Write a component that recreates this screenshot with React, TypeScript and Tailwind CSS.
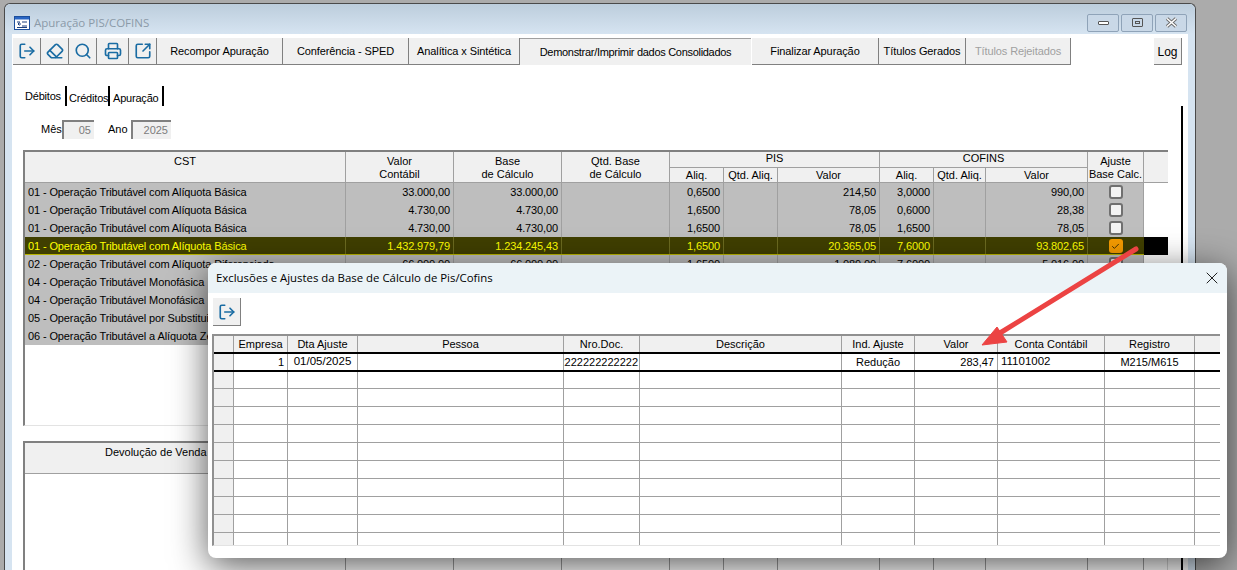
import React from 'react';
import { Check, Eraser, LogOut, Printer, Search, SquareArrowOutUpRight, X } from 'lucide-react';

const MAIN_COLS = 'grid grid-cols-[321px_108px_108px_108px_54px_54px_102px_54px_52px_102px_56px_24px]';
const DIALOG_COLS = 'grid grid-cols-[20px_54px_70px_206px_76px_202px_73px_83px_107px_90px_25px]';

const toolButtons = [
  { icon: LogOut, width: 'w-[28px]' },
  { icon: Eraser, width: 'w-[28px]' },
  { icon: Search, width: 'w-[28px]' },
  { icon: Printer, width: 'w-[32px]' },
  { icon: SquareArrowOutUpRight, width: 'w-[28px]' },
];

const rows = [
  { cst: '01 - Operação Tributável com Alíquota Básica', valor: '33.000,00', base: '33.000,00', pis: '0,6500', pisValor: '214,50', cofins: '3,0000', cofinsValor: '990,00', box: 'off' },
  { cst: '01 - Operação Tributável com Alíquota Básica', valor: '4.730,00', base: '4.730,00', pis: '1,6500', pisValor: '78,05', cofins: '0,6000', cofinsValor: '28,38', box: 'off' },
  { cst: '01 - Operação Tributável com Alíquota Básica', valor: '4.730,00', base: '4.730,00', pis: '1,6500', pisValor: '78,05', cofins: '1,6500', cofinsValor: '78,05', box: 'off' },
  { cst: '01 - Operação Tributável com Alíquota Básica', valor: '1.432.979,79', base: '1.234.245,43', pis: '1,6500', pisValor: '20.365,05', cofins: '7,6000', cofinsValor: '93.802,65', box: 'on', selected: true },
  { cst: '02 - Operação Tributável com Alíquota Diferenciada', valor: '66.000,00', base: '66.000,00', pis: '1,6500', pisValor: '1.089,00', cofins: '7,6000', cofinsValor: '5.016,00', box: 'off' },
  { cst: '04 - Operação Tributável Monofásica', valor: '', base: '', pis: '', pisValor: '', cofins: '', cofinsValor: '', box: 'none' },
  { cst: '04 - Operação Tributável Monofásica', valor: '', base: '', pis: '', pisValor: '', cofins: '', cofinsValor: '', box: 'none' },
  { cst: '05 - Operação Tributável por Substituição', valor: '', base: '', pis: '', pisValor: '', cofins: '', cofinsValor: '', box: 'none' },
  { cst: '06 - Operação Tributável a Alíquota Zero', valor: '', base: '', pis: '', pisValor: '', cofins: '', cofinsValor: '', box: 'none' },
];

const dialogHeads = ['', 'Empresa', 'Dta Ajuste', 'Pessoa', 'Nro.Doc.', 'Descrição', 'Ind. Ajuste', 'Valor', 'Conta Contábil', 'Registro', ''];

const Head = ({ children, className = '' }: { children?: React.ReactNode; className?: string }) => (
  <div className={`bg-[#f0f0f0] border-r border-b border-[#a0a0a0] text-center text-[11px] leading-[13px] ${className}`}>{children}</div>
);

const GridRow = ({ row }: { row: (typeof rows)[number] }) => {
  const selected = !!row.selected;
  const cell = `h-full flex items-center justify-end pr-[3px] text-[11px] tracking-[-0.12px] whitespace-nowrap overflow-hidden border-r ${selected ? 'border-[#6b6a20]' : 'border-[#a0a0a0]'}`;
  return (
    <div className={`${MAIN_COLS} h-[18px] ${selected ? 'bg-[#403f00] text-[#ffff00]' : 'bg-[#bebebe] text-black'}`}>
      <div className={`${cell} !justify-start pl-[3px]`}>{row.cst}</div>
      <div className={cell}>{row.valor}</div>
      <div className={cell}>{row.base}</div>
      <div className={cell} />
      <div className={cell}>{row.pis}</div>
      <div className={cell} />
      <div className={cell}>{row.pisValor}</div>
      <div className={cell}>{row.cofins}</div>
      <div className={cell} />
      <div className={cell}>{row.cofinsValor}</div>
      <div className={`h-full flex items-center justify-center border-r ${selected ? 'border-[#403f00]' : 'border-[#a0a0a0]'}`}>
        {row.box === 'off' && <span className="w-[14px] h-[14px] rounded-[3px] border-2 border-[#707070] bg-[#f3f3f3]" />}
        {row.box === 'on' && (
          <span className="w-[14px] h-[14px] rounded-[3px] bg-[#f59b00] flex items-center justify-center text-[#3a2a00]">
            <Check size={9} strokeWidth={2.5} />
          </span>
        )}
      </div>
      <div className={`h-full ${selected ? 'bg-black' : 'bg-white'}`} />
    </div>
  );
};

const DialogRow = ({ first, second }: { first?: boolean; second?: boolean }) => {
  const cell = 'h-full border-r border-[#a0a0a0] flex items-center whitespace-nowrap overflow-hidden bg-white text-[11px]';
  const height = second ? 'h-[17px]' : 'h-[18px]';
  return (
    <div className={`${DIALOG_COLS} ${height} ${first ? 'border-b-2 border-black' : 'border-b border-[#a0a0a0]'}`}>
      <div className="h-full border-r border-[#a0a0a0] bg-[#f0f0f0]" />
      <div className={`${cell} justify-end pr-[3px]`}>{first && '1'}</div>
      <div className={`${cell} justify-center !text-[11.5px]`}>{first && '01/05/2025'}</div>
      <div className={cell} />
      <div className={`${cell} justify-end pr-[1px]`}>{first && '2222222222222'}</div>
      <div className={cell} />
      <div className={`${cell} justify-center`}>{first && 'Redução'}</div>
      <div className={`${cell} justify-end pr-[3px]`}>{first && '283,47'}</div>
      <div className={`${cell} !text-[11.5px] pl-[3px]`}>{first && '11101002'}</div>
      <div className={`${cell} justify-center`}>{first && 'M215/M615'}</div>
      <div className="h-full bg-white" />
    </div>
  );
};

const ReadOnlyInput = ({ value, className }: { value: string; className: string }) => (
  <div className={`h-[19px] bg-[#f0f0f0] border-l-2 border-t-2 border-[#808080] text-right pr-[3px] leading-[16px] text-[#7c7c7c] ${className}`}>{value}</div>
);

const WindowButton = ({ children }: { children: React.ReactNode }) => (
  <div className="w-[32px] h-[18px] rounded-[2px] border border-[#8fa3b8] bg-[#c9d8e7] flex items-center justify-center">{children}</div>
);

export default function App() {
  return (
    <div className="relative w-[1237px] h-[570px] overflow-hidden bg-[#ababab] pt-[3px] pl-[4px] font-['Liberation_Sans',sans-serif] text-[11px] text-black">
      {/* janela principal */}
      <div className="w-[1192px] h-[600px] rounded-t-[6px] border-l border-t border-r border-[#4a4a4a] bg-[#d6e4f1] flex flex-col">
        <div className="h-[30px] shrink-0 rounded-t-[6px] bg-gradient-to-b from-[#bccddc] to-[#d6e4f1] flex items-center pt-[7px] pl-[9px] pr-[8px]">
          <svg width="16" height="14" viewBox="0 0 16 14" className="shrink-0">
            <rect x="0.5" y="0.5" width="15" height="13" fill="#fff" stroke="#1c4f9c" />
            <rect x="1" y="1" width="14" height="2.5" fill="#2a66c4" />
            <path d="M3 6h3M7 8H4l1.5-1.5M4 8l1.5 1.5M8 6h5M8 10h5M3 11.5h10" stroke="#1c3f7c" fill="none" />
          </svg>
          <span className="ml-[4px] font-['Open_Sans',sans-serif] text-[11.5px] text-[#8b9aa8]">Apuração PIS/COFINS</span>
          <div className="ml-auto flex gap-[2px]">
            <WindowButton><span className="w-[11px] h-[4px] rounded-[1px] border border-[#555] bg-white" /></WindowButton>
            <WindowButton><span className="w-[11px] h-[9px] rounded-[1px] border border-[#555] flex items-center justify-center"><span className="w-[5px] h-[3px] border border-[#555]" /></span></WindowButton>
            <WindowButton>
              <svg width="13" height="11" viewBox="0 0 13 11">
                <path d="M2 1.5 L11 9.5 M11 1.5 L2 9.5" stroke="#6a6a6a" strokeWidth="3.4" />
                <path d="M2 1.5 L11 9.5 M11 1.5 L2 9.5" stroke="#fff" strokeWidth="1.6" />
              </svg>
            </WindowButton>
          </div>
        </div>

        <div className="mx-[7px] flex-1 bg-white">
          {/* barra de ferramentas */}
          <div className="pt-[4px] ml-[1px] flex h-[31px] items-stretch">
            {toolButtons.map((b, i) => (
              <div key={i} className={`${b.width} bg-[#f0f0f0] border-r border-b border-[#808080] flex items-center justify-center text-[#1a6ca3]`}>
                <b.icon size={18} strokeWidth={2.2} />
              </div>
            ))}
            {[
              ['Recompor Apuração', 'w-[126px]'],
              ['Conferência - SPED', 'w-[126px]'],
              ['Analítica x Sintética', 'w-[111px]'],
            ].map(([t, w]) => (
              <div key={t} className={`${w} bg-[#f0f0f0] border-r border-b border-[#808080] flex items-center justify-center pt-[1px] whitespace-nowrap tracking-[-0.1px]`}>{t}</div>
            ))}
            <div className="w-[231px] bg-[#f0f0f0] border-t border-[#a0a0a0] flex items-center justify-center pt-[1px] whitespace-nowrap tracking-[-0.3px]">Demonstrar/Imprimir dados Consolidados</div>
            {[
              ['Finalizar Apuração', 'w-[127px] ml-[1px]', ''],
              ['Títulos Gerados', 'w-[87px]', ''],
              ['Títulos Rejeitados', 'w-[105px]', 'text-[#a0a0a0]'],
            ].map(([t, w, c]) => (
              <div key={t} className={`${w} ${c} bg-[#f0f0f0] border-r border-b border-[#808080] flex items-center justify-center pt-[1px] whitespace-nowrap tracking-[-0.1px]`}>{t}</div>
            ))}
            <div className="ml-auto mr-[6px] w-[28px] bg-[#f0f0f0] border-r border-b border-[#808080] flex items-center justify-center pt-[1px] text-[12px]">Log</div>
          </div>

          {/* abas */}
          <div className="mt-[21px] h-[20px] pl-[13px] flex tracking-[-0.2px]">
            <span className="w-[40px] pt-[2px]">Débitos</span>
            <span className="w-[45px] pl-[2px] pt-[4px] border-l-2 border-r-2 border-black">Créditos</span>
            <span className="w-[54px] pl-[3px] pt-[4px] border-r-2 border-black">Apuração</span>
          </div>

          <div className="mr-[5px] h-[600px] border-r-2 border-black pt-[14px]">
            <div className="flex items-center pl-[29px]">
              <span className="w-[21px]">Mês</span>
              <ReadOnlyInput value="05" className="w-[32px]" />
              <span className="ml-[14px] w-[23px]">Ano</span>
              <ReadOnlyInput value="2025" className="w-[40px]" />
            </div>

            {/* grade de débitos */}
            <div className="mt-[11px] ml-[11px] w-[1145px] h-[276px] border-l-2 border-t-2 border-[#808080] border-b-[#e3e3e3] border-b bg-white">
              <div className={`${MAIN_COLS} grid-rows-[16px_15px]`}>
                <Head className="row-span-2 pt-[3px]">CST</Head>
                <Head className="row-span-2 pt-[3px]">Valor<br />Contábil</Head>
                <Head className="row-span-2 pt-[3px]">Base<br />de Cálculo</Head>
                <Head className="row-span-2 pt-[3px]">Qtd. Base<br />de Cálculo</Head>
                <Head className="col-span-3">PIS</Head>
                <Head className="col-span-3">COFINS</Head>
                <Head className="row-span-2 pt-[3px] whitespace-nowrap">Ajuste<br />Base Calc.</Head>
                <Head className="row-span-2 border-r-0" />
                <Head className="pt-[1px]">Aliq.</Head>
                <Head className="pt-[1px]">Qtd. Aliq.</Head>
                <Head className="pt-[1px]">Valor</Head>
                <Head className="pt-[1px]">Aliq.</Head>
                <Head className="pt-[1px]">Qtd. Aliq.</Head>
                <Head className="pt-[1px]">Valor</Head>
              </div>
              {rows.map((row, i) => (
                <div key={i} className="relative">
                  <GridRow row={row} />
                  {row.selected && <div className="absolute left-0 bottom-[-1px] w-[1119px] h-[2px] bg-[#b8b400]" />}
                </div>
              ))}
            </div>

            {/* grade de devoluções */}
            <div className="mt-[15px] ml-[11px] w-[1145px] border-l-2 border-t-2 border-[#808080] bg-white">
              <div className={`${MAIN_COLS} h-[31px]`}>
                <Head className="pt-[3px] !text-left pl-[80px]">Devolução de Venda</Head>
                {Array.from({ length: 10 }, (_, i) => <Head key={i} />)}
                <Head className="border-r-0" />
              </div>
              <div className={`${MAIN_COLS} h-[120px]`}>
                {Array.from({ length: 11 }, (_, i) => <div key={i} className="border-r border-[#a0a0a0]" />)}
                <div className="border-r border-[#d8d8d8]" />
              </div>
            </div>
          </div>
        </div>
      </div>

      {/* janela de ajustes */}
      <div className="absolute left-[208px] top-[263px] w-[1019px] h-[295px] rounded-[8px] bg-white shadow-[0_8px_36px_rgba(0,0,0,0.65)] overflow-hidden flex flex-col">
        <div className="h-[30px] shrink-0 bg-[#ebf3f7] flex items-center justify-between pl-[8px] pr-[5px] font-['Open_Sans',sans-serif] text-[11.4px]">
          <span>Exclusões e Ajustes da Base de Cálculo de Pis/Cofins</span>
          <X size={20} strokeWidth={1.2} className="text-[#222]" />
        </div>
        <div className="mt-[5px] ml-[5px] w-[28px] h-[28px] bg-[#f0f0f0] border-r border-b border-[#808080] flex items-center justify-center text-[#1a6ca3]">
          <LogOut size={18} strokeWidth={2.2} />
        </div>
        <div className="mt-[8px] ml-[4px] w-[1008px] h-[212px] border-l-2 border-t-2 border-[#909090] border-b border-b-[#e3e3e3] overflow-hidden">
          <div className={`${DIALOG_COLS} h-[18px] border-b-2 border-black`}>
            {dialogHeads.map((h, i) => (
              <div key={i} className={`bg-[#f0f0f0] text-center leading-[16px] ${i < 10 ? 'border-r border-[#a0a0a0]' : ''}`}>{h}</div>
            ))}
          </div>
          <DialogRow first />
          <DialogRow second />
          {Array.from({ length: 10 }, (_, i) => <DialogRow key={i} />)}
        </div>
      </div>

      {/* seta de destaque */}
      <svg className="absolute left-[970px] top-[240px] pointer-events-none" width="180" height="115" viewBox="970 240 180 115">
        <path d="M1136 249 L1000 333" stroke="#ec4343" strokeWidth="5" strokeLinecap="round" fill="none" />
        <path d="M982 345 L997 327 L1007 342 Z" fill="#ec4343" stroke="#ec4343" strokeLinejoin="round" />
      </svg>
    </div>
  );
}
